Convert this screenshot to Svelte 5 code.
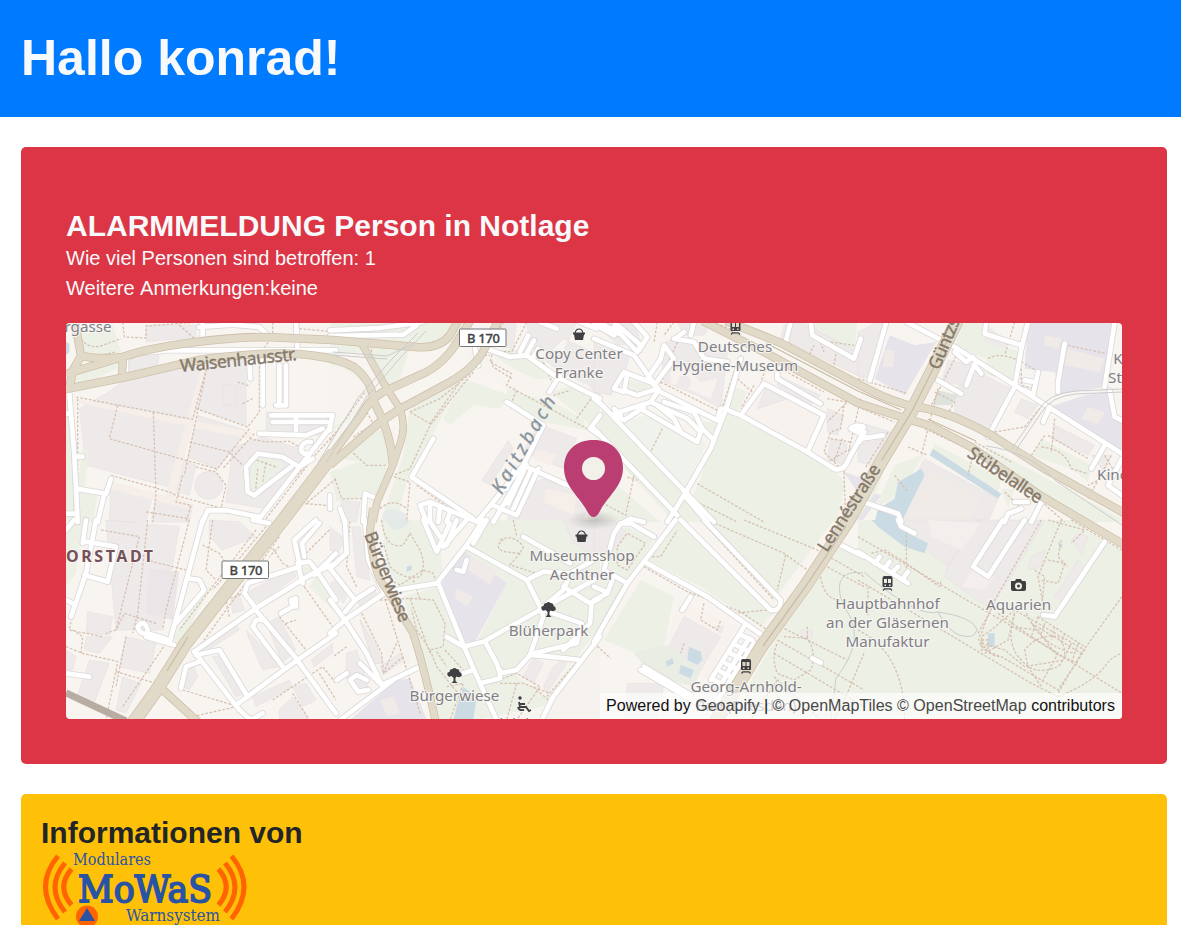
<script>
  const grass = '#edf0e5', building = '#eeeaea', school = '#e6e3ea', water = '#cbdbe3', plaza = '#f6eee9';

  // Each sheet covers 270 x 200 map units, drawn on a grid three times finer.
  const sheets = [
    {
      x: 0, y: -1,
      areas: [
        [building, 'M40 260L120 215L190 165L410 125L330 500L60 430ZM190 100L280 90L275 135L190 155ZM430 110H540V310L395 260ZM395 280L540 325L455 440L365 405ZM135 480L260 520L240 600H130ZM500 375L590 345L700 380L720 420L600 560L480 540ZM240 10H390V45L240 60ZM600 270L800 280L770 340H600ZM270 525L380 550L370 600H255ZM345 410L390 430L370 520L310 505Z'],
        [plaza, 'M410 125L430 120L320 545L295 535ZM30 230L560 330L545 350L25 240ZM140 480L370 540L365 560L130 500Z'],
        [grass, 'M45 30L140 10L165 90L70 110L40 90ZM30 155L155 125L150 140L50 190L25 185ZM0 230H20L30 600H0ZM40 510L95 520L80 600H40ZM560 410L640 405L650 430L570 515L550 490ZM50 380L70 385L55 495L35 490Z'],
        [building, 'M386 490a42 42 0 1 0 84 0a42 42 0 1 0-84 0ZM470 190H510V250H470Z'],
        [water, 'M0 60L10 65V90L0 100Z']
      ],
      roads: ['M10 215L25 400L30 500L35 600', 'M0 275H15', 'M28 404H50', 'M690 0L695 95', 'M410 0V50', 'M400 15L500 8L580 15L610 45', 'M180 155V110L210 95L300 85H810', 'M590 250V110', 'M630 250H660V130', 'M640 130V245', 'M30 500L120 515L135 470', 'M115 515L95 600', 'M580 335L720 340L770 320', 'M615 280H800L790 320L580 590', 'M690 285V325', 'M620 300H780', 'M740 410L700 435L650 405L575 395L540 435L545 510L565 520L590 500L675 435', 'M735 360C700 355 695 400 725 395', 'M410 600L425 565H480L580 585', 'M0 575H30', 'M550 110L553 170'],
      paths: ['M40 0V40Q60 85 110 70L165 50', 'M170 0L175 45L240 48V12L400 0', 'M330 0L385 50', 'M50 110L150 90', 'M30 225L380 292L425 125L355 460', 'M155 250L130 350L450 440', 'M262 270L270 520L260 600', 'M390 260L545 315L580 270V110', 'M515 180L550 192M530 245L560 230', 'M550 320L450 445M565 335L470 440', 'M370 360L490 390L530 430', 'M550 350L600 360L670 358L700 375', 'M135 460L310 510L330 520L470 560', 'M390 435L450 450L480 490L465 560', 'M350 460L330 540L375 550L360 600', 'M240 570L370 590', 'M35 230V480M15 300L25 570', 'M560 410L630 435M575 440L568 515M600 420L590 480', 'M740 410L600 590', 'M590 575L810 330', 'M810 470L720 545L780 550', 'M700 20L810 30M620 0V40L590 85']
    },
    {
      x: 264, y: -1,
      areas: [
        [grass, 'M0 0H400L380 60L0 100ZM90 85L240 80L210 170L170 190ZM0 110Q90 130 120 210L60 290L0 330ZM240 250L410 150L300 350L230 480L200 590L180 600H150L220 400ZM400 170L540 220L510 260L430 250L360 310L340 290ZM530 190L600 200L760 290L770 325L640 300L535 250ZM120 315L165 330L175 430L30 410ZM0 450L120 410L175 440L140 520L20 540ZM480 90L550 80L640 110L660 170L540 170ZM660 210L730 190L810 240V300L790 315Z'],
        ['#f7f4f0', 'M0 130Q70 140 110 200Q110 260 0 320ZM430 60L550 140L660 190L650 240L535 200L400 130Z'],
        [building, 'M500 0H560L550 80L490 70ZM590 0H740L700 90L600 80ZM640 110L690 150L780 190L810 240V100L700 50ZM625 305L740 350L700 440L580 390ZM570 500L640 470L790 540L750 600H530ZM455 475L535 355L550 380L480 490ZM35 535L90 540L80 600H30Z'],
        [plaza, 'M650 500L740 520L730 580L640 540ZM620 380L680 400L660 430L610 410Z'],
        ['#e6ebe9', 'M160 570Q200 550 230 580V600H160Z']
      ],
      roads: ['M0 25L150 18L280 0', 'M0 42L220 38L260 10', 'M435 80L445 130', 'M470 80L540 105L590 100L680 165L810 230', 'M570 90L595 40M590 95L612 55M610 105L625 80', 'M690 160L658 210', 'M630 0L680 20M750 0L800 20', 'M310 350L245 465L430 590', 'M530 240L640 310L580 430L440 600', 'M590 430L490 600', 'M625 440L560 580L490 550', 'M580 430L690 480L740 500', 'M810 280L780 320L810 340', 'M555 440L530 500M580 450L535 545M600 450L550 560', 'M270 550L290 600M270 550L300 540L430 595M300 545V600M330 555L325 600M360 570L350 600', 'M130 525L105 515L100 600', 'M0 520V560M30 560L45 600', 'M0 300V325'],
      paths: ['M430 150L300 310L240 440L190 460', 'M240 270L300 305L390 180M240 270L330 230L420 155', 'M60 385L110 430L170 430M110 270L130 305L70 345', 'M0 355L105 210M15 470L35 530L110 530', 'M0 430L160 300M180 460L240 480L230 600', 'M150 560Q190 525 230 560', 'M590 0L545 90L490 85L480 120L545 155L530 190L780 325', 'M485 115L490 135L545 170M560 205L545 240', 'M500 0L465 80M520 0L480 80', 'M640 120L670 190M790 220L740 290', 'M120 30L125 90M260 490L420 600', 'M450 100H480M670 220L720 205']
    },
    {
      x: 528, y: -1,
      areas: [
        [grass, 'M400 270L720 445L755 480L730 600H260L310 490L360 360ZM30 250L360 600H240L0 340ZM80 300L160 280L250 330L320 370L340 360L270 510ZM410 190L460 210L430 270L400 260ZM290 300L370 300L350 350L300 310ZM650 0H790L780 100L660 40ZM0 430L200 600H0ZM100 170L170 190L130 230L90 190Z'],
        ['#f0f3ec', 'M80 300L160 280L250 330L340 360L270 510Z'],
        [building, 'M200 70L250 40L400 90L380 260L310 220L210 180ZM250 0H350L330 40H270ZM570 10L620 0L810 100V170L560 50ZM550 160L680 220L650 250L550 190ZM700 260L750 280L730 340L700 330ZM710 350L760 365L750 430L700 410ZM0 60L110 90L90 160L50 220L0 210ZM0 0H120L140 60L70 70Z'],
        ['#f7f2ee', 'M510 190L690 280L640 390L450 280ZM250 185Q250 150 285 165Q300 185 280 200L350 230L370 170L320 180L270 130L230 150V190Z'],
        [building, 'M515 195L575 232L490 260Z'],
        [school, 'M750 450L810 470V540Z']
      ],
      roads: ['M0 230L25 250L360 600', 'M0 320L250 580', 'M0 50L120 100L180 185L200 210L370 295L380 260', 'M440 110L400 250L350 380L270 520L220 600', 'M390 260L440 280L640 390L720 440Q750 450 765 410L800 345', 'M440 280L510 185L690 280L640 390', 'M180 190L240 110L210 70L200 110L160 170', 'M180 185L90 150L60 200L90 210L100 155M90 205L130 220L190 200', 'M190 210L170 240L60 275L90 295L150 255', 'M170 240L280 290L320 330L310 360L250 325L140 260', 'M210 240L300 270L325 320L360 355M190 250L240 290L260 330', 'M60 260L80 280M60 0L140 70L130 90L60 15M120 0L160 45L135 85', 'M240 50L300 60L330 110L400 120M250 45L270 30', 'M300 0L290 40M590 0L575 60', 'M550 150V170L680 245', 'M650 0L655 40L780 110L800 50', 'M770 320L810 340M770 320Q785 305 810 315', 'M270 520L340 600', 'M90 600L110 590L150 600', 'M0 5L60 40M15 0L75 35'],
      paths: ['M200 180L380 270L430 120', 'M205 320L165 400', 'M310 485L510 600M280 525L430 600', 'M750 450L755 600', 'M120 460L95 580L30 545M100 465L130 475', 'M480 190L440 260M430 170L480 215', 'M130 60L145 95M250 60L210 150M220 130L200 185', 'M700 230L760 240L700 300M750 250L740 320L710 330L690 390L740 440M710 350L770 360M770 380L700 420M745 350L720 420', 'M710 60L780 70M680 60L690 90M730 70L720 130M640 110L660 70', 'M560 140L690 210M600 130L780 230', 'M190 0L180 60M240 0L210 40', 'M355 0L420 25M440 100L430 160', 'M520 130L500 180M800 230L750 450']
    },
    {
      x: 792, y: -1,
      areas: [
        [building, 'M270 115L350 130L320 190L250 180ZM290 200L360 150L460 200L390 330L290 270ZM490 230L540 250L510 290L470 270ZM200 410L420 530L390 600H90ZM590 310L710 370L690 400L580 350ZM700 400L760 400L740 450ZM0 30L60 0H90L40 170L0 160ZM0 300L100 330L40 430L0 420ZM320 0H370L450 60L430 100L330 60Z'],
        [school, 'M510 0H770L740 195L610 215L590 150L500 140ZM590 250L680 220L755 210L765 285L792 300V390L570 260ZM95 40L170 70L235 60L140 220L50 170ZM70 520L10 600H0V500Z'],
        [grass, 'M270 0H370L380 60L490 90L480 150L380 110L290 70ZM390 110L480 130L470 185L370 150ZM110 430L200 395L140 490L120 520L50 560ZM230 365L430 470L420 510L220 390ZM550 350L700 430L690 480L640 440L520 400ZM660 490L710 500L700 530L650 510ZM400 380L792 590V600H680L560 520L350 400ZM430 500L470 500L450 560ZM0 500L40 430L90 400L60 500L0 590Z'],
        ['#f1ebe8', 'M560 40L610 50L600 80L560 70ZM690 255L740 270L720 305L670 290ZM80 85H110L105 135H75ZM630 80L740 110L725 150L620 130ZM220 450L370 530L330 600H140Z'],
        [water, 'M225 380L430 515L420 530L215 400ZM190 440L200 460L130 600H50L60 560L110 530L120 480Z'],
        ['#dee3de', 'M240 205L300 220L280 250H225Z']
      ],
      roads: ['M145 0L290 75L440 170L540 235L792 395', 'M510 0L490 80L470 195L390 345', 'M385 0L380 35L490 70', 'M85 0L35 175', 'M620 65L600 180V210', 'M770 0L740 195', 'M755 205L770 285L792 295', 'M350 125L325 190M240 175L310 215', 'M540 150L525 220L500 205M500 175L530 180', 'M575 255L555 300', 'M740 370L700 440', 'M290 90L325 120L345 105M350 130L370 155', 'M0 535L120 575L130 600', 'M0 320L20 330L5 360M10 350L75 340', 'M520 600L550 540M440 600L450 575L490 560M470 540H510', 'M792 410L750 490L792 520'],
      paths: ['M390 110Q440 80 540 150M400 155L470 190M490 140V190L530 200', 'M470 0L440 100', 'M630 70L745 95', 'M410 330L500 315L560 240', 'M240 200L190 400M230 210L290 240L260 290', 'M560 340L520 400M570 340L690 410M550 375Q620 380 640 440L690 455', 'M590 290L580 390M760 400L690 530M740 400L770 450L690 490', 'M300 90L220 250M350 380L330 460', 'M0 170L150 215M0 255L110 300', 'M200 320L340 385M350 360L460 420', 'M150 375L210 400M110 460L150 510', 'M90 330L20 440M130 330L10 510', 'M540 530L620 600M440 510L490 560']
    },
    {
      x: 0, y: 197,
      areas: [
        [building, 'M120 0L340 20L285 330H150ZM65 275L140 290L130 345L60 340ZM180 350L270 370L250 460L160 440ZM60 350L140 350L100 400L55 390ZM70 420L130 430L80 560L30 540ZM170 470L225 490L180 580L150 570ZM0 390L30 410L20 450H0ZM440 410L470 405L540 520L510 530ZM600 310L640 290L690 390L650 430ZM540 330L590 380L640 440L590 450L550 360ZM560 530L670 480L680 500L570 560ZM380 430L395 470L370 510L350 500ZM495 240L520 225L535 270L500 280ZM400 380L510 310L520 330L410 400ZM430 0L520 5L570 50L470 90L430 50ZM540 220L680 140L690 170L580 250ZM640 570L680 530L730 600H640ZM735 420L800 370V400L745 440ZM680 500L720 490L750 540L710 560Z'],
        ['#eae6e7', 'M250 145L340 155L320 300L240 280Z'],
        [grass, 'M0 20L50 0L30 160L0 200ZM320 350L420 210L440 190L340 380ZM710 140L750 145L730 170L700 160ZM730 200L760 160L810 240V280Z']
      ],
      roads: ['M90 0L60 160L15 290', 'M55 165L125 185L150 80L60 65', 'M0 240L20 250M60 0L50 70', 'M410 0L310 370', 'M365 175L400 180L415 210L330 310', 'M215 320Q235 295 245 330L240 350L325 375M215 320Q220 345 245 340L310 360', 'M385 395L570 265L740 160L810 130', 'M385 395L520 570L555 600', 'M390 405L460 390L545 530', 'M400 425L360 440L345 505', 'M510 555L680 430L810 340', 'M565 265L590 295L690 415L810 580', 'M650 440L560 320L570 300L595 300', 'M570 265L535 220L545 190L700 140', 'M710 190L695 130L730 125L750 150L810 240', 'M745 165L810 100M700 130L685 60L750 0M715 110L708 70L760 10', 'M645 280L680 260L675 240L690 235V260', 'M0 460L70 470', 'M555 600L590 580M560 0L610 10', 'M0 30L25 0'],
      paths: ['M105 30L220 50L150 330', 'M245 0L215 280L200 340', 'M370 0L300 270L290 330', 'M240 120L360 150M270 310L175 280L150 330L120 340', 'M20 280L10 330L110 350M0 380L50 400L155 425L120 600M20 330L50 350L45 400', 'M150 455L270 490M180 350L150 500', 'M340 400L190 600M300 370L170 560', 'M440 0L420 150L450 180M410 75L460 100L480 130', 'M570 30L340 330M600 20L440 210', 'M640 290L720 390M660 310L690 300M715 200L800 320', 'M620 85L650 130L690 150M490 290L480 240L530 220', 'M640 50L400 380M350 510L500 555M380 590L510 560', 'M620 540L770 440L810 490M680 520L730 600M760 460L810 540', 'M720 100L790 30M640 80L610 110']
    },
    {
      x: 264, y: 197,
      areas: [
        [grass, 'M155 0H280L330 60L340 180L220 220L170 140ZM220 230L320 200L400 380L450 490L500 600H320L270 420ZM460 0H730L760 60L810 100V320L740 410L640 560L480 590L400 380L440 365L530 190L400 90Z'],
        [school, 'M400 90L530 190L435 365H405L335 190ZM200 480L240 475L270 550L290 600H60Z'],
        [building, 'M0 20L50 60L20 100L0 90ZM65 20H90L110 120L120 180L80 170ZM0 190L20 180L50 230L40 250ZM80 230L130 200L140 220L90 265ZM90 300L140 380L160 430L130 430ZM150 440L210 400L220 420L160 465ZM50 400L80 390L115 500L80 510L45 470ZM700 0H810V120L730 70ZM610 415L640 430L610 490L580 470ZM670 440L700 420L710 430L650 520L640 500ZM200 370L210 385L195 395Z'],
        ['#f0ebe9', 'M420 110L500 150L480 195L415 150ZM380 205L430 230L410 260L375 235ZM150 540L190 530L210 580L170 590Z'],
        ['#f6f2ed', 'M600 400L730 430L650 530L560 470ZM740 420L810 350V600H640ZM80 260L200 260L250 370L240 430L160 460Z'],
        [building, 'M610 415L640 430L610 490L580 470ZM670 440L700 420L710 430L650 520L640 500ZM90 300L140 380L160 430L130 430ZM150 440L210 400L220 420L160 465Z'],
        ['#e3e9e6', 'M165 0Q200 60 240 0Z'],
        [water, 'M380 560L400 500L440 530L430 600H370ZM230 140L245 135V150L230 155Z']
      ],
      roads: ['M0 340L45 300L170 215L320 190L410 75L460 0', 'M0 240L45 300L110 400L155 495L270 440', 'M0 145L75 240L130 205M0 145L50 100L45 0M75 240L45 275', 'M105 0L115 120L160 215', 'M30 600L190 480L155 495L90 430M115 510L85 515L60 480L80 465L110 480', 'M325 190L400 375L450 490L500 600', 'M350 350L400 380L460 365L620 275L810 170', 'M410 80L590 180L630 260L640 290L600 405L560 450L510 460L500 430L465 365', 'M600 405L660 410L750 420M610 400L740 370L755 310L640 270', 'M600 175L640 155L720 160L810 110M700 200L780 250L810 235M785 250L780 310L700 390M580 50L720 130M720 165L700 210L640 260', 'M640 590L670 530L810 350', 'M450 490L510 475V450M400 460L430 450', 'M280 0L320 95L360 10M300 5L330 50M410 0L340 80M380 150L400 155L410 120', 'M380 0L350 75M470 0L430 70', 'M20 480L50 460'],
      paths: ['M155 0Q165 90 220 75L240 40L270 90Q290 140 270 170Q220 180 180 140L160 70', 'M180 180L210 195L280 150L310 160L320 190', 'M150 240L240 235L310 240L345 310L340 380L300 390L260 330L245 270', 'M300 390L320 440L400 540M345 390L400 450M250 180L270 240', 'M510 60Q550 40 580 80L570 100L520 95Q490 80 520 60M570 100L540 135L620 160M550 0L560 50', 'M480 490L560 460L630 500L560 600M560 490L530 600M510 490L580 490L660 520', 'M650 530L780 380', 'M320 395L350 440M240 235L300 400', 'M95 280L155 400L160 460M50 380L10 410M80 200L50 140L60 0', 'M200 370L160 460L220 410M270 580L160 220', 'M610 500L660 545M350 500L400 490L360 600']
    },
    {
      x: 528, y: 197,
      areas: [
        [grass, 'M230 10L160 120L320 200L500 320L550 270L250 0ZM330 0H720L540 240ZM60 40L100 20L180 60L100 180L20 160ZM140 180L240 230L210 380L150 410L30 360ZM550 350L740 80L810 100V600H400ZM0 170L90 190L0 350Z'],
        ['#f7f2ed', 'M260 240L430 320L340 480L200 400Z'],
        [building, 'M270 290L380 350L320 450L220 390ZM0 0H60L100 40L50 100H0ZM360 320L390 320L380 340ZM100 490H210L190 600H90ZM620 330H655V355H625Z'],
        ['#e9ede3', 'M120 400L220 375L320 450L300 500L180 470Z'],
        [water, 'M285 380L320 395L325 420L310 435L280 420ZM260 435L300 450L290 475L255 460ZM215 425L235 415L240 430L220 440Z']
      ],
      roads: ['M260 0L530 270Q560 275 560 240L330 0', 'M245 0L100 190L0 365', 'M150 125L340 230L510 350', 'M60 40L80 10L110 10L180 50M60 40L30 150L100 190', 'M290 230L265 270', 'M450 320L350 480M465 355L370 510M480 370L370 540', 'M440 345L475 360M425 375L460 392M410 400L445 418M395 430L430 448M380 455L415 473M360 480L395 498', 'M140 450L310 550M150 440L290 525', 'M0 240L40 220L55 180M0 200L35 215', 'M730 70L810 110', 'M655 415L680 428'],
      paths: ['M240 10L160 110L200 110L250 30', 'M70 80L100 40L155 70L100 150L70 135Z', 'M150 140L280 215L440 275L520 330M300 215L430 290', 'M320 0L540 240', 'M340 0L570 100L640 150M450 0L670 90L810 170', 'M575 105L550 210', 'M680 170Q690 240 740 240M810 200L680 130', 'M420 280L520 270M410 270L500 340', 'M330 250L320 300L370 330L380 300M270 370L260 400', 'M570 350L640 355Q670 400 650 450L600 480L550 460Q530 410 550 370', 'M550 360L810 510M540 400L810 560M560 320L760 420M640 320V360', 'M550 480L470 600M540 470L680 600M0 370L50 415', 'M0 350L90 190', 'M810 400L760 520L720 600']
    },
    {
      x: 792, y: 197,
      areas: [
        [grass, 'M0 0H90L250 110L270 150L400 260L380 330L540 0H640L740 60L792 90V600H0Z'],
        [building, 'M90 0H370L270 140L170 60ZM270 130L360 0H560L400 270L260 170ZM520 110L560 90L550 140L510 150ZM590 230L660 120L680 140L620 250ZM640 60L660 40L690 50L670 100Z'],
        ['#f4efec', 'M340 150L410 170L380 210L310 200ZM210 0L370 10L310 90L220 50Z'],
        [grass, 'M540 170L600 100L630 120L600 190L560 200Z'],
        [water, 'M40 0H120L150 40L210 70L200 100L140 80L60 20ZM390 340H410V380H390ZM600 65L615 75L605 90Z']
      ],
      roads: ['M0 95L150 190', 'M50 130L65 110M80 145L95 125M105 155L120 140M135 175L150 155', 'M435 0L345 140L390 170L500 0', 'M740 65L590 290L555 285', 'M120 0L130 20L170 40'],
      paths: ['M145 20V150M40 100L80 90L130 120L245 200L250 180', 'M0 50L550 370L792 520M0 180L520 490L600 530', 'M30 200V290M0 330Q140 400 140 600', 'M550 0L410 240L370 340Q340 380 430 410L550 480L600 510L680 390L470 270L400 330L370 350Q380 410 430 410', 'M610 0L540 170L555 250M530 150L560 170L550 270', 'M570 120L620 130L600 190L545 180M610 60L600 110L630 140', 'M470 280Q440 370 490 420Q530 470 600 440Q640 400 600 350Q540 340 500 390L510 440L550 500', 'M505 280Q550 380 650 400M540 290L520 350L600 400L550 490M460 320L540 330L590 400L660 430', 'M370 370L440 390L500 440L620 420M380 400L450 360L470 280M420 280L520 350', 'M600 530Q700 490 740 440Q760 410 792 400', 'M792 230L670 400L600 520M640 0L792 90', 'M540 290L680 380M520 310L670 400M640 370L620 410M560 310L550 340M590 320L580 360M620 340L610 370M660 370L640 430', 'M570 0L680 30L640 70', 'M370 360H390V390H370ZM360 340L410 250']
    }
  ];

  const majors = [
    ['M57 34C90 22 160 14 200 14L267 17L350 24Q374 26 384 12L392 -2', 7],
    ['M0 66L60 54L133 37Q187 29 233 31Q270 34 288 44Q306 58 308 79Q325 110 327 142', 7],
    ['M57 34L0 51M3 66L7 47L15 33L10 5L7 -2M15 33Q35 37 57 34L56 51', 7],
    ['M432 -2L419 25Q410 44 384 59L334 86L314 99L264 142', 7],
    ['M404 -2L393 16Q378 42 354 52L317 69Q303 77 296 91L258 142', 7],
    ['M296 21L317 59L334 86Q340 102 335 118L327 142L311 179L307 199', 6],
    ['M307 185L304 207Q306 250 321 267L347 310Q357 340 370 400', 6.5],
    ['M268 130L217 197L167 260L120 320L90 368L67 400', 12],
    ['M97 367L133 400', 7],
    ['M660 -2L715 20L792 61Q825 79 850 84Q880 87 925 112L979 146L1060 191', 7],
    ['M637 -2L700 30L792 80Q850 99 865 103L905 124L975 173L1060 223', 7],
    ['M891 -2L866 48L845 89L815 139L784 195L740 262L695 324L649 400', 12]
  ];

  // Text labels: lines, x, first baseline
  const labels = [
    [['rgasse'], 22, 8.5], [['Copy Center', 'Franke'], 513, 36], [['Deutsches', 'Hygiene-Museum'], 669, 29],
    [['Museumsshop', 'Aechtner'], 516, 238], [['Blüherpark'], 482.5, 312.5], [['Bürgerwiese'], 388.5, 378],
    [['Georg-Arnhold-', 'Bad (Dresden)'], 680, 368.5], [['Hauptbahnhof', 'an der Gläsernen', 'Manufaktur'], 821.5, 286],
    [['Aquarien'], 952.5, 287], [['Kino'], 1047, 157], [['K'], 1052, 41], [['St'], 1049, 60], [['Spielplatz'], 450, 406]
  ];
  // Road names: text, centre, angle, length
  const streets = [
    ['Waisenhausstr.', 173, 43, -6, 117], ['Güntzstr', 886, 17, -67, 67], ['Stübelallee', 936, 157, 34, 86],
    ['Lennéstraße', 788, 188, -57, 100], ['Bürgerwiese', 316, 256, 68, 96]
  ];
</script>

<header class="topbar"><h1>Hallo konrad!</h1></header>

<main>
  <section class="card alarm">
    <h2>ALARMMELDUNG Person in Notlage</h2>
    <p>Wie viel Personen sind betroffen: 1</p>
    <p class="note">Weitere Anmerkungen:keine</p>
    <svg class="map" viewBox="0 0 1056 396">
      <rect width="1056" height="396" fill="#f8f4f0" />
      {#each sheets as s}
        <g transform="translate({s.x} {s.y}) scale(.33333)">
          {#each s.areas as [fill, d]}<path {d} {fill} class:built={fill === building} />{/each}
        </g>
      {/each}
      {#each sheets as s}
        <g transform="translate({s.x} {s.y}) scale(.33333)">
          {#each s.paths as d}<path {d} class="foot" />{/each}
        </g>
      {/each}
      {#each sheets as s}
        <g transform="translate({s.x} {s.y}) scale(.33333)">
          {#each s.roads as d}<path {d} class="casing" />{/each}
        </g>
      {/each}
      {#each sheets as s}
        <g transform="translate({s.x} {s.y}) scale(.33333)">
          {#each s.roads as d}<path {d} class="street" />{/each}
        </g>
      {/each}
      <path d="M0 370L60 398" stroke="#b9aca2" stroke-width="7" fill="none" />
      {#each majors as [d, w]}<path {d} fill="none" stroke="#cebfa9" stroke-width={w + 1.5} />{/each}
      {#each majors as [d, w]}<path {d} fill="none" stroke="#e1dac9" stroke-width={w} />{/each}
      <path class="median" d="M883 14L867 46L846 88L816 137M780 203L740 263L697 323M700 20L792 68L835 87M862 96L910 118M122 314L101 348" />
      <g class="tram">
        <path d="M252 140L292 75L326 36L352 10M260 140L300 75L334 35L360 8M267 29L321 33L345 22M267 32L321 36" />
        <path d="M1056 69L1010 71Q985 73 975 90L950 127M1056 66L1010 68Q982 70 972 88L945 127M920 123Q965 129 990 158L1056 202" />
        <path d="M797 250C765 245 772 275 781 288Q800 318 770 355L765 396M798 249Q850 295 872 289Q907 294 911 307Q908 317 893 312Q880 306 872 289" />
      </g>

      <g class="names">
        {#each labels as [lines, x, y]}
          <text {x} {y}>{#each lines as line, i}<tspan {x} dy={i ? 19 : 0}>{line}</tspan>{/each}</text>
        {/each}
      </g>
      <g class="roadnames">
        {#each streets as [name, x, y, angle, length]}
          <text transform="translate({x} {y}) rotate({angle})" textLength={length}>{name}</text>
        {/each}
      </g>
      <text class="river" transform="translate(463 125) rotate(-60)" textLength="109">Kaitzbach</text>
      <text class="district" x="0" y="239" textLength="87">ORSTADT</text>

      {#each [[393.5, 6], [156, 238]] as [x, y]}
        <g class="shield" transform="translate({x} {y})">
          <rect width="46.5" height="17.5" rx="1" />
          <text x="24" y="13.5" textLength="33">B 170</text>
        </g>
      {/each}

      {#each [[513, 11], [515.5, 213]] as [x, y]}
        <g class="poi" transform="translate({x} {y})">
          <path d="M-6-1.5H6V.5H5L4 6H-4L-5 .5H-6Z" /><path class="line" d="M-4-1Q-3-5 0-5T4-1" />
        </g>
      {/each}
      {#each [[669.5, 4], [821.5, 260], [680, 343]] as [x, y]}
        <g class="poi" transform="translate({x} {y})">
          <path fill-rule="evenodd" d="M-3-7H3Q5-7 5-5V3Q5 4 4 4H-4Q-5 4-5 3V-5Q-5-7-3-7ZM-3.5-4V0H-.5V-4ZM.5-4V0H3.5V-4ZM-3 1.5V3H-1.5V1.5ZM1.5 1.5V3H3V1.5Z" />
          <path class="line" d="M-4.5 7.5L-3 5.8H3L4.5 7.5" />
        </g>
      {/each}
      {#each [[482.5, 286], [388.5, 352]] as [x, y]}
        <path class="poi" transform="translate({x} {y})" d="M-2-6Q0-8 2-6Q5-6 5-3Q8-2 7 1Q5 3 2 1.5L1 3V6L3 8H-3L-1 6V3L-3 1Q-6 3-7 0Q-8-3-5-3Q-5-6-2-6Z" />
      {/each}
      <path class="poi" fill-rule="evenodd" d="M945 258H949L950 256H955L956 258H959Q960 258 960 260V266Q960 268 958 268H947Q945 268 945 266ZM952.5 259.5A3.5 3.5 0 1 0 952.5 266.5A3.5 3.5 0 1 0 952.5 259.5ZM952.5 261.5A1.5 1.5 0 1 1 952.5 264.5A1.5 1.5 0 1 1 952.5 261.5Z" />
      <g class="poi"><circle cx="454" cy="375" r="1.7" /><path class="heavy" d="M453 379L454 384H460L463 388L465 387M454 381H459M452 384Q453 388 458 387" /></g>

      <defs><radialGradient id="shade"><stop stop-color="#999" stop-opacity=".5" /><stop offset="1" stop-color="#999" stop-opacity="0" /></radialGradient></defs>
      <ellipse cx="528" cy="197" rx="26" ry="10" fill="url(#shade)" />
      <path d="M527.5 194Q524 194 521 188C513 173 498 163 498 145C498 127 511 117 527.500 117C544 117 557 127 557 145C557 163 542 173 534 188Q531 194 527.500 194Z" fill="#bb3e73" />
      <circle cx="527.500" cy="145.500" r="11.500" fill="#f1f1ea" />
      <rect x="534" y="370" width="522" height="26" fill="#fff" fill-opacity=".65" />
      <text class="credit" x="540" y="388" textLength="509" lengthAdjust="spacingAndGlyphs">Powered by <tspan>Geoapify</tspan> | <tspan>© OpenMapTiles</tspan> <tspan>© OpenStreetMap</tspan> contributors</text>
    </svg>
  </section>

  <section class="card info">
    <h2>Informationen von</h2>
    <svg class="logo" viewBox="0 0 210 90">
      <g fill="none" stroke="#ff6400" stroke-width="5">
        <path d="M17 5Q-8 35 17 68M24 12Q4 36 24 61M30.500 18Q15 36 30.500 54" />
        <path d="M190.500 5Q215.500 35 190.500 68M184 12Q204 36 184 61M177.500 18Q193 36 177.500 54" />
      </g>
      <g class="wordmark">
        <text x="32" y="14" textLength="78" lengthAdjust="spacingAndGlyphs">Modulares</text>
        <text class="big" x="37" y="51" textLength="134" lengthAdjust="spacingAndGlyphs">MoWaS</text>
        <text x="85" y="70" textLength="94" lengthAdjust="spacingAndGlyphs">Warnsystem</text>
      </g>
      <circle cx="46" cy="65.500" r="11" fill="#ff6400" />
      <path d="M46 57L54 70H38Z" fill="#2953a5" />
    </svg>
  </section>
</main>

<style>
  :global(body) { margin: 0; background: #fff; overflow: hidden; }
  :global(#app) { height: 925px; overflow: hidden; font-family: 'Liberation Sans', sans-serif; }
  h1, h2, p { margin: 0; }
  .topbar { box-sizing: border-box; height: 117px; padding: 28px 21px; background: #007bff; color: #f8f9fa; }
  h1 { font-size: 50px; line-height: 60px; }
  h2 { font-size: 30px; line-height: 36px; }
  p { font-size: 20px; line-height: 30px; }
  .note { word-spacing: 1.1px; }
  main { display: flex; flex-direction: column; gap: 30px; padding: 30px 14px 30px 21px; }
  .card { border-radius: 5px; }
  .alarm { padding: 61px 45px 45px; height: 511px; background: #dc3545; color: #f8f9fa; }
  .alarm h2 { margin-bottom: -1px; }
  .info { padding: 21px 20px 60px; background: #ffc107; color: #212529; }
  .map { display: block; width: 1056px; height: 396px; margin-top: 20px; border-radius: 4px; overflow: hidden; }
  .logo { display: block; width: 210px; height: 90px; }
  .built { stroke: #ddd8d8; stroke-opacity: .5; stroke-width: 2; }
  .foot { fill: none; stroke: #d6c0b2; stroke-width: 3.8; stroke-dasharray: 8 5; }
  .casing { fill: none; stroke: #dbd9da; stroke-width: 19; stroke-linecap: round; stroke-linejoin: round; }
  .street { fill: none; stroke: #fff; stroke-width: 14; stroke-linecap: round; stroke-linejoin: round; }
  .tram path { fill: none; stroke: #cbcccd; stroke-width: 1; }
  .median { fill: none; stroke: #c8bca6; stroke-width: 1.300; }
  .names { font: 15.200px 'Noto Sans', sans-serif; fill: #7f7f86; text-anchor: middle; stroke: #f8f6f2; stroke-width: 2; paint-order: stroke; }
  .roadnames { font: 17.500px 'Noto Sans', sans-serif; fill: #85796b; text-anchor: middle; stroke: #85796b; stroke-width: .4; }
  .river { font: italic 19px 'Noto Sans', sans-serif; fill: #8a949d; text-anchor: middle; stroke: #8a949d; stroke-width: .3; }
  .district { font: bold 16px 'Noto Sans', sans-serif; fill: #74515a; stroke: #f8f4f0; stroke-width: 2; paint-order: stroke; }
  .shield rect { fill: #fff; stroke: #777; }
  .shield text { font: 500 13px 'Noto Sans', sans-serif; fill: #444; stroke: #444; stroke-width: .3; text-anchor: middle; }
  .poi { fill: #3f3f42; }
  .line { fill: none; stroke: #3f3f42; stroke-width: 1.200; }
  .heavy { fill: none; stroke: #3f3f42; stroke-width: 1.800; }
  .credit { font: 16px 'Liberation Sans', sans-serif; fill: #111; }
  .credit tspan { fill: #484848; }
  .wordmark { font: 16px 'DejaVu Serif', serif; fill: #2953a5; }
  .big { font-size: 37px; stroke: #2953a5; stroke-width: 1.800; }
</style>
